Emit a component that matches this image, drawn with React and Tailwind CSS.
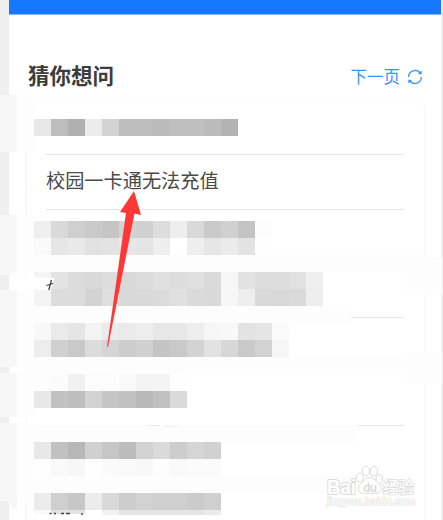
import React from "react";

const mosaics = {
  first: [["e8", "bd", "b0", "ec", "d3", "bd", "bd", "bb", "bf", "bf", "bb", "b3"]],
  second: [
    ["ef", "d9", "cf", "ca", "c5", "d3", "d0", "dd", "ee", "d9", "ca", "d0", "c3", "fc"],
    ["fa", "e6", "e9", "e1", "e3", "e7", "e4", "ee", "ff", "ee", "e6", "eb", "e3", "fe"],
  ],
  third: [
    ["f4", "e3", "dc", "d9", "dd", "d9", "dc", "e0", "dd", "e0", "da", "f6", "e2", "dd", "dd", "e1", "ef"],
    ["f4", "dc", "dc", "d3", "df", "d9", "d9", "db", "e0", "da", "d9", "f6", "ee", "d9", "d8", "da", "ee"],
  ],
  fourth: [
    ["f8", "ea", "e5", "f3", "eb", "ea", "ed", "e7", "e7", "ed", "f6", "f8", "e3", "e5", "fb"],
    ["ed", "d0", "c9", "dc", "d5", "cc", "d0", "c4", "c9", "d3", "e2", "d7", "c9", "d2", "f6"],
  ],
  fifth: [
    ["fd", "fb", "f1", "fc", "fc", "f9", "f4", "f4", "fe"],
    ["e8", "c1", "be", "d3", "c5", "c1", "b9", "c0", "da"],
  ],
  sixth: [
    ["e8", "c1", "b7", "d0", "c6", "bc", "d2", "da", "cd", "d5", "d1"],
    ["fe", "f9", "f7", "fe", "fa", "f9", "f8", "fd", "f9", "fb", "fb"],
  ],
  seventh: [["ec", "cf", "c7", "ec", "d9", "cd", "d2", "cf", "cf", "cb", "cf"]],
};

function Mosaic({ rows, className = "" }) {
  return (
    <div className={"ml-[7px] shrink-0 " + className}>
      {rows.map((row, r) => (
        <div key={r} className="flex">
          {row.map((c, i) => (
            <span key={i} className="h-[17px] w-[17px] shrink-0" style={{ backgroundColor: "#" + c + c + c }} />
          ))}
        </div>
      ))}
    </div>
  );
}

function Band({ className }) {
  return <div className={"shrink-0 bg-[#fdfdfd] " + className} />;
}

function RefreshIcon() {
  return (
    <svg className="h-4 w-4" viewBox="0 0 16 16" fill="none" stroke="#3b91fb" strokeWidth="1.3">
      <path d="M1.600 8A6.400 6.400 0 0 1 13.400 4.500M14.400 8A6.400 6.400 0 0 1 2.600 11.500" />
      <path d="M14.600 1.500V5.600L10.900 4.600ZM1.400 14.500V10.400L5.100 11.400Z" fill="#3b91fb" stroke="none" />
    </svg>
  );
}

function Watermark() {
  return (
    <svg className="absolute left-[322px] top-[462px] h-[52px] w-[100px]" viewBox="0 0 100 52" fill="#fff" stroke="#dcdcdc" strokeLinejoin="round">
      <text x="5" y="31.500" fontFamily="Liberation Sans, Arial, sans-serif" fontWeight="700" fontSize="19.500" strokeWidth="2" paintOrder="stroke" textLength="29" lengthAdjust="spacingAndGlyphs">Bai</text>
      <g strokeWidth="1">
        <ellipse cx="37.800" cy="15.500" rx="3.400" ry="4.500" />
        <ellipse cx="44" cy="9" rx="3.600" ry="4.800" />
        <ellipse cx="51.800" cy="9.300" rx="3.600" ry="4.800" transform="rotate(12 51.800 9.300)" />
        <ellipse cx="57.300" cy="17" rx="3.400" ry="4.500" />
        <path d="M47.500 15.500c-4 0-5 3-8 5.500-4.500 3.500-4 10.500 2 10.500 4 0 8-.5 12 0 6.500 0 7.500-6.500 3-10.500-3-2.500-5-5.500-9-5.500Z" />
      </g>
      <text x="41" y="30" fontFamily="Liberation Sans, Arial, sans-serif" fontWeight="700" fontSize="12" fill="#dadada" stroke="none" textLength="14">du</text>
      <text x="61" y="30.500" fontFamily="Noto Sans CJK SC, sans-serif" fontWeight="500" fontSize="15.500" strokeWidth="1.600" paintOrder="stroke">经验</text>
      <text x="5" y="43" fontFamily="Liberation Sans, Arial, sans-serif" fontSize="10" strokeWidth="1.200" stroke="#e4e4e4" paintOrder="stroke" textLength="88" lengthAdjust="spacingAndGlyphs">jingyan.baidu.com</text>
    </svg>
  );
}

export default function App() {
  return (
    <div className="relative flex h-[520px] w-[443px] overflow-hidden bg-[#efefef] font-['Noto_Sans_CJK_SC',sans-serif]">
      <main className="ml-[9px] flex w-[432px] shrink-0 flex-col bg-white">
        <div className="h-[15px] shrink-0 border-b border-[#7db5ff] bg-[#1677ff]" />
        <header className="flex h-[86px] shrink-0 items-center justify-between pl-[19px] pr-[18px] pt-[35px]">
          <h1 className="mb-[2px] text-[21.5px] font-bold leading-none text-[#3c3c3c]">猜你想问</h1>
          <a className="mt-[2px] flex items-center gap-[7px] text-[16.5px] leading-none text-[#3b91fb]">
            下一页 <RefreshIcon />
          </a>
        </header>
        <section className="ml-4 flex h-[419px] w-[401px] shrink-0 flex-col overflow-hidden rounded-t-lg border-x-2 border-t border-x-[#f9f9f9] border-t-[#fbfbfb]">
          <Mosaic rows={mosaics.first} className="mt-[17px]" />
          <div className="ml-[19px] mt-[18px] flex h-[56px] w-[358px] shrink-0 items-center border-y border-[#e6e6e6] pb-[2px] text-[19.2px] leading-none text-[#4a4a4a]">
            校园一卡通无法充值
          </div>
          <Mosaic rows={mosaics.second} className="mt-[11px]" />
          <Band className="h-[17px]" />
          <Mosaic rows={mosaics.third} />
          <div className="flex h-[17px] shrink-0 items-start">
            <Band className="h-full w-[324px]" />
            <span className="mt-[11px] h-px w-[53px] bg-[#e6e6e6]" />
          </div>
          <Mosaic rows={mosaics.fourth} />
          <Band className="h-[17px]" />
          <Mosaic rows={mosaics.fifth} />
          <div className="h-[17px] shrink-0" />
          <div className="flex h-[17px] shrink-0 items-start bg-[linear-gradient(to_right,#fdfdfd_331px,transparent_331px)] pl-[120px]">
            <span className="h-px w-[13px] bg-[#ebebeb]" />
            <span className="ml-1 mt-px h-px w-[14px] bg-[#f0f0f0]" />
            <span className="ml-[180px] h-px w-[46px] bg-[#e6e6e6]" />
          </div>
          <Mosaic rows={mosaics.sixth} />
          <Band className="h-[17px] w-[331px]" />
          <Mosaic rows={mosaics.seventh} />
          <div className="ml-[7px] flex h-[5px] shrink-0">
            <span className="w-[17px] bg-[#f9f9f9]" />
            <span className="w-[34px] bg-[#e2e2e2]" />
            <span className="w-[17px] bg-white" />
            <span className="w-[17px] bg-[#f2f2f2]" />
            <span className="w-[85px] bg-[#e4e4e4]" />
            <span className="w-[17px] bg-[#ebebeb]" />
          </div>
        </section>
      </main>

      <div className="absolute left-0 top-[95px] flex flex-col">
        {[
          ["57px", "63px"],
          ["58px", "17px"],
          ["77px", "6px"],
          ["44px", "6px"],
          ["78px", "0px"],
        ].map(([h, gap], i) => (
          <div key={i} className="flex" style={{ height: h, marginBottom: gap }}>
            <span className="w-[17px] bg-[#f7f7f7]" />
            <span className="w-[17px] bg-[#fdfdfd]" />
          </div>
        ))}
      </div>
      <div className="absolute left-[407px] top-[257px] h-[37px] w-[35px] bg-[#fdfdfd]" />
      <div className="absolute left-[407px] top-[352px] h-[32px] w-[35px] bg-[#fdfdfd]" />

      <svg className="absolute inset-0 h-[520px] w-[443px]" viewBox="0 0 443 520">
        <path d="M9 275L27 277L54.500 278L51 290H9Z" fill="#fff" />
        <path d="M0 271L17 275H0Z" fill="#f7f7f7" />
        <path d="M9 501H17V511L9 503Z" fill="#f7f7f7" />
        <path d="M34 514H85V520H34Z" fill="#fff" />
        <path d="M46.500 285.500L53 283.500M51.500 280L48.800 290" stroke="#444" strokeWidth="1.300" fill="none" />
        <path d="M49.500 513.500h2m2.500 0h2m5 0h3m2 0h4m11 .5h2" stroke="#444" strokeWidth="1.500" />
        <path d="M134 191L141 215L134.500 213.500L108 347H107L126 213L120 212Z" fill="#ff3737" />
      </svg>
      <Watermark />
    </div>
  );
}
